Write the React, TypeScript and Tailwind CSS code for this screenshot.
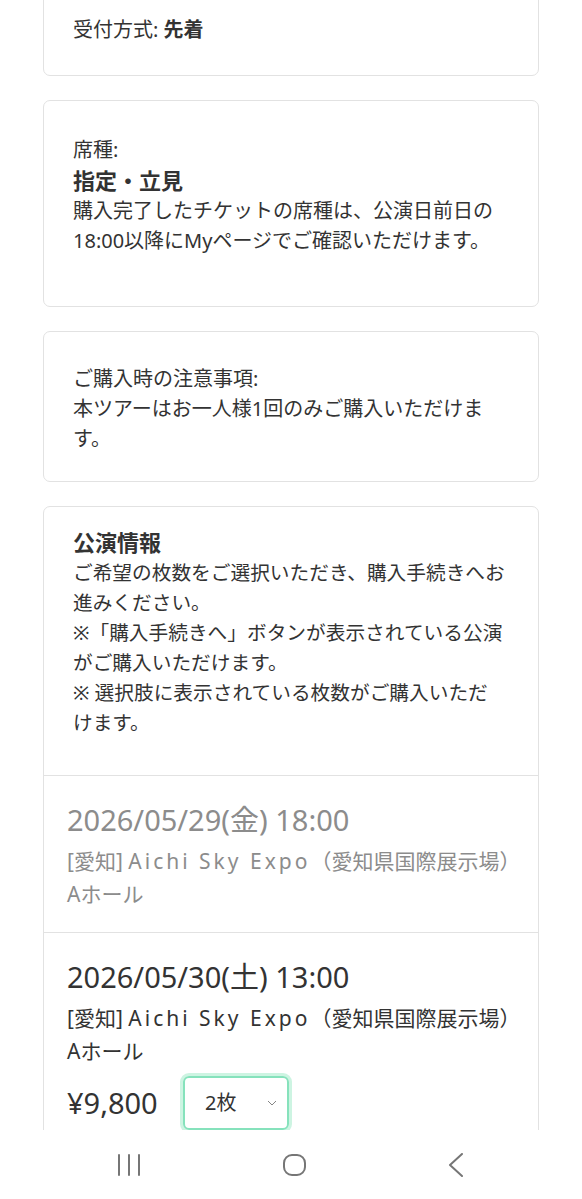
import React from 'react';

const font = 'font-["Noto_Sans","Noto_Sans_CJK_JP",sans-serif]';

interface Show {
  date: string;
  pref: string;
  venue: string;
  venueJa: string;
  hall: string;
  soldOut?: boolean;
  price?: string;
  qty?: string;
}

const shows: Show[] = [
  {
    date: '2026/05/29(金) 18:00',
    pref: '[愛知]',
    venue: 'Aichi Sky Expo',
    venueJa: '（愛知県国際展示場）',
    hall: 'Aホール',
    soldOut: true,
  },
  {
    date: '2026/05/30(土) 13:00',
    pref: '[愛知]',
    venue: 'Aichi Sky Expo',
    venueJa: '（愛知県国際展示場）',
    hall: 'Aホール',
    price: '¥9,800',
    qty: '2枚',
  },
];

const Card: React.FC<{ className?: string; children: React.ReactNode }> = ({ className = '', children }) => (
  <div className={`border border-[#e2e2e2] rounded-[7px] bg-white ${className}`}>{children}</div>
);

const ShowRow: React.FC<{ show: Show }> = ({ show }) => {
  const tone = show.soldOut ? 'text-[#8c8c8c]' : 'text-[#333333]';
  return (
    <div className={`border-t border-[#e2e2e2] px-[23px] pt-[24px] pb-[21px] ${tone}`}>
      <div className="text-[29px] leading-[40px]">{show.date}</div>
      <div className="mt-[5px] text-[21px] leading-[33px] whitespace-nowrap">
        {show.pref} <span className="tracking-[3px]">{show.venue}</span>
        {show.venueJa}
        <br />
        {show.hall}
      </div>
      {show.price && (
        <div className="mt-[8px] flex items-center">
          <div className="text-[29px] leading-[40px] w-[91px]">{show.price}</div>
          <div className="ml-[25px] w-[106px] h-[54px] rounded-[6px] border-2 border-[#86e2bc] ring-[3px] ring-[#cdf4e2] flex items-center justify-between pl-[20px] pr-[10px]">
            <span className="text-[20px] leading-[30px]">{show.qty}</span>
            <svg width="10" height="6" viewBox="0 0 10 6" fill="none" stroke="#777" strokeWidth="0.9">
              <path d="M1 1l4 4 4-4" />
            </svg>
          </div>
        </div>
      )}
    </div>
  );
};

export default function App() {
  return (
    <div className={`h-[1199px] flex flex-col bg-white overflow-hidden text-[#333333] ${font}`}>
      <div className="flex-1 min-h-0 overflow-hidden">
        <div className="px-[43px] -mt-[18px] flex flex-col gap-[24px]">
          <Card className="px-[29px] pt-[32px] pb-[30px]">
            <p className="text-[20px] leading-[30px]">
              受付方式: <span className="font-bold">先着</span>
            </p>
          </Card>

          <Card className="px-[29px] pt-[34px] pb-[50px]">
            <p className="text-[20px] leading-[30px]">席種:</p>
            <p className="text-[22px] leading-[31px] font-bold">指定・立見</p>
            <p className="text-[20px] leading-[30px]">
              購入完了したチケットの席種は、公演日前日の
              <br />
              18:00以降にMyページでご確認いただけます。
            </p>
          </Card>

          <Card className="px-[29px] pt-[32px] pb-[27px]">
            <p className="text-[20px] leading-[30px]">ご購入時の注意事項:</p>
            <p className="text-[20px] leading-[30px]">
              本ツアーはお一人様1回のみご購入いただけま
              <br />
              す。
            </p>
          </Card>

          <Card className="overflow-hidden">
            <div className="px-[29px] pt-[20px] pb-[37px]">
              <p className="text-[22px] leading-[31px] font-bold">公演情報</p>
              <p className="text-[19.7px] leading-[30px] whitespace-nowrap">
                ご希望の枚数をご選択いただき、購入手続きへお
                <br />
                進みください。
                <br />
                ※「購入手続きへ」ボタンが表示されている公演
                <br />
                がご購入いただけます。
                <br />
                ※ 選択肢に表示されている枚数がご購入いただ
                <br />
                けます。
              </p>
            </div>
            {shows.map(s => (
              <ShowRow key={s.date} show={s} />
            ))}
          </Card>
        </div>
      </div>

      {/* Android navigation bar */}
      <div className="h-[69px] shrink-0 bg-white flex items-center justify-between pl-[118px] pr-[119px]">
        <svg width="22" height="22" viewBox="0 0 22 22" fill="none" stroke="#767676" strokeWidth="2" strokeLinecap="round">
          <path d="M1 1v20M11 1v20M21 1v20" />
        </svg>
        <svg width="23" height="22" viewBox="0 0 23 22" fill="none" stroke="#767676" strokeWidth="2">
          <rect x="1" y="1" width="21" height="20" rx="8" />
        </svg>
        <svg width="15" height="24" viewBox="0 0 15 24" fill="none" stroke="#767676" strokeWidth="2" strokeLinecap="round" strokeLinejoin="round">
          <path d="M14 1L2 12l12 11" />
        </svg>
      </div>
    </div>
  );
}
